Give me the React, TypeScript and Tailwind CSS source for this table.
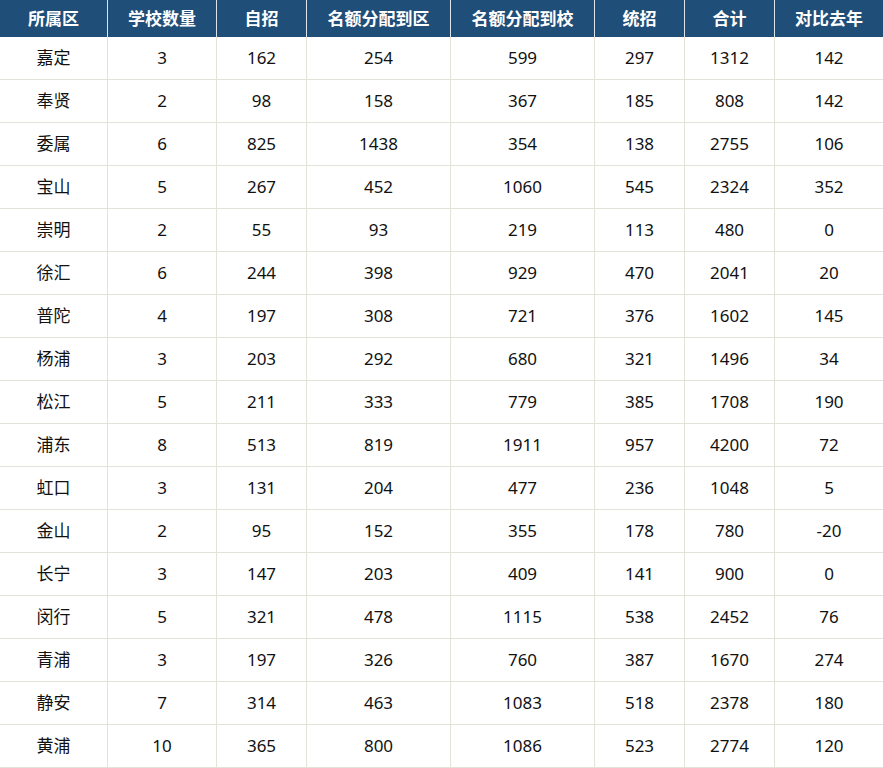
import React from 'react';

const headers = ['所属区', '学校数量', '自招', '名额分配到区', '名额分配到校', '统招', '合计', '对比去年'];

const rows: (string | number)[][] = [
  ['嘉定', 3, 162, 254, 599, 297, 1312, 142],
  ['奉贤', 2, 98, 158, 367, 185, 808, 142],
  ['委属', 6, 825, 1438, 354, 138, 2755, 106],
  ['宝山', 5, 267, 452, 1060, 545, 2324, 352],
  ['崇明', 2, 55, 93, 219, 113, 480, 0],
  ['徐汇', 6, 244, 398, 929, 470, 2041, 20],
  ['普陀', 4, 197, 308, 721, 376, 1602, 145],
  ['杨浦', 3, 203, 292, 680, 321, 1496, 34],
  ['松江', 5, 211, 333, 779, 385, 1708, 190],
  ['浦东', 8, 513, 819, 1911, 957, 4200, 72],
  ['虹口', 3, 131, 204, 477, 236, 1048, 5],
  ['金山', 2, 95, 152, 355, 178, 780, -20],
  ['长宁', 3, 147, 203, 409, 141, 900, 0],
  ['闵行', 5, 321, 478, 1115, 538, 2452, 76],
  ['青浦', 3, 197, 326, 760, 387, 1670, 274],
  ['静安', 7, 314, 463, 1083, 518, 2378, 180],
  ['黄浦', 10, 365, 800, 1086, 523, 2774, 120],
];

const App = () => {
  return (
    <div className="w-[883px] bg-white font-['Noto_Sans','Noto_Sans_CJK_SC',sans-serif]">
      <div className="grid grid-cols-[108px_109px_90px_144px_144px_90px_90px_108px]">
        {headers.map((h, i) => (
          <div
            key={h}
            className={`h-[37px] flex items-center justify-center bg-[#1f4e79] text-white font-bold text-[17px] ${
              i < headers.length - 1 ? 'border-r border-[#dbe3ec]' : ''
            }`}
          >
            {h}
          </div>
        ))}
        {rows.map((row) =>
          row.map((cell, i) => (
            <div
              key={`${row[0]}-${i}`}
              className={`h-[43px] flex items-center justify-center text-[17px] text-[#111] border-b border-[#e2e2d8] ${
                i < row.length - 1 ? 'border-r' : ''
              }`}
            >
              {cell}
            </div>
          ))
        )}
      </div>
    </div>
  );
};

export default App;
